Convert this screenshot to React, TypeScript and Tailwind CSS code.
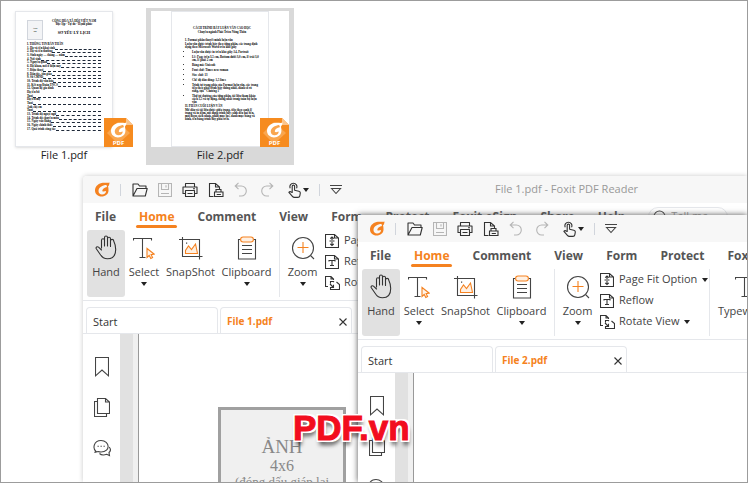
import type { ReactNode } from "react";

type IconProps = { className?: string };

const MENUS = ["File", "Home", "Comment", "View", "Form", "Protect", "Foxit eSign", "Share", "Help"];

function FoxitMark({ className }: IconProps) {
  return (
    <svg viewBox="0 0 30 30" className={className} aria-hidden="true">
      <path
        fill="currentColor"
        fillRule="evenodd"
        d="M29 1C26 3 20 0 13 2 5 4 0 10 0 17c0 7 6 12 13 12 8 0 14-5 14-12 0-3 0-5-1-8 2-2 3-5 3-8zM23 6C15 6 7 11 7 18c0 4 3 7 7 7 5 0 8-3 8-7l-5 1c-2 0-3-1-2-3 1-3 4-5 9-6z"
      />
    </svg>
  );
}

function Line({ size, className, children }: { size: string; className?: string; children: ReactNode }) {
  return (
    <svg
      viewBox={size}
      className={"shrink-0 " + (className ?? "")}
      fill="none"
      stroke="currentColor"
      strokeWidth="1.1"
      aria-hidden="true"
    >
      {children}
    </svg>
  );
}

function Caret() {
  return (
    <svg viewBox="0 0 6 4" className="h-1 w-1.5 shrink-0 text-[#222]" aria-hidden="true">
      <path fill="currentColor" d="M0 0h6L3 4z" />
    </svg>
  );
}

const OpenIcon = () => (
  <Line size="0 0 16 14" className="h-[14px] w-4 text-[#333]">
    <path d="M1 13V1h5l1.500 2H14v2.500M1 13h12.300l1.900-7.500H5L1 13z" strokeLinejoin="round" />
  </Line>
);

const SaveIcon = () => (
  <Line size="0 0 14 14" className="h-[14px] w-[14px] text-[#b5b5b5]">
    <path d="M.5.5h13v13H.5zM3.500.5v6h7v-6M8 2.200v2.300M3 10.500h8" />
  </Line>
);

const PrintIcon = () => (
  <Line size="0 0 16 16" className="h-4 w-4 text-[#333]">
    <path d="M3.500 5V1.500h9V5M3.500 11.500H1V5h14v6.500h-2.500M3.500 8.500h9v6h-9zM11 6.800h2M5.500 11.500h5" strokeLinejoin="round" />
  </Line>
);

const PagePrintIcon = () => (
  <Line size="0 0 16 16" className="h-4 w-4 text-[#333]">
    <path d="M5.500 14.500h-4v-13h6L11.500 5v2M7.500 1.500V5h4M8 10V7.500h5V10M6.500 10h8.500v4.500H6.500zM8.700 12.500h4.200" />
  </Line>
);

const UndoIcon = () => (
  <Line size="0 0 13 15" className="h-[15px] w-[13px] text-[#b5b5b5]">
    <path d="M4.500.8 1.200 4l3.300 3.200M1.500 4h5.800a5 5 0 0 1 0 10H5" />
  </Line>
);

const RedoIcon = () => (
  <Line size="0 0 13 15" className="h-[15px] w-[13px] text-[#b5b5b5]">
    <path d="M8.500.8 11.800 4 8.500 7.200M11.500 4H5.700a5 5 0 0 0 0 10H8" />
  </Line>
);

const TouchIcon = () => (
  <Line size="0 0 13 16" className="h-4 w-[13px] text-[#333]">
    <path
      d="M4.200 10.500V4.300a1.200 1.200 0 0 1 2.400 0v4l4.200.9c1 .2 1.600.9 1.500 1.900l-.5 2.700c-.2 1-.8 1.600-1.800 1.600H6.300c-.8 0-1.400-.4-1.900-1L.9 10.300c.7-1 1.800-.8 2.400-.1zM2.300 6.300a3.500 3.500 0 1 1 6.200 0"
      strokeLinejoin="round"
    />
  </Line>
);

const MoreIcon = () => (
  <Line size="0 0 12 10" className="h-2.5 w-3 text-[#444]">
    <path d="M0 .5h12M1.500 3.500 6 8.500l4.500-5z" />
  </Line>
);

const HandIcon = () => (
  <Line size="0 0 22 25" className="h-[25px] w-[22px] text-[#333]">
    <path
      d="M6.500 13V5.200a1.500 1.500 0 0 1 3 0V11M9.500 5V2.500a1.500 1.500 0 0 1 3 0V11M12.500 3.700a1.500 1.500 0 0 1 3 0V11.500M15.500 6a1.600 1.600 0 0 1 3.200 0c1 2 2 5 2 8.500 0 6-3 9.300-8.200 9.300-4 0-5.700-1.800-7.400-4.600L1.300 13.800c-.8-1.400.9-2.700 2.200-1.600L6.500 15"
      strokeLinecap="round"
      strokeLinejoin="round"
    />
  </Line>
);

const SelectIcon = () => (
  <Line size="0 0 22 24" className="h-6 w-[22px] text-[#444]">
    <path d="M.5 4.500v-2h18v2M9.500 2.500v19M6.500 21.500h6" />
    <path d="M14 12.500v9l2.200-2 1.600 3 1.800-1-1.500-2.800 3-.6z" stroke="#f58220" fill="#fff4ea" />
  </Line>
);

const SnapIcon = () => (
  <Line size="0 0 24 24" className="h-6 w-6 text-[#444]">
    <path d="M0 3.500h20.500V23.500M3.500 1v19.500H23.500" />
    <path d="M6.500 17.500v-3l3-4.500 3 3.500 4-5.500 2 9.500z" stroke="#f58220" fill="#fff0e2" />
    <path d="M7 6.500h1.200v1.200H7z" fill="currentColor" stroke="none" />
  </Line>
);

const ClipboardIcon = () => (
  <Line size="0 0 20 24" className="h-6 w-5 text-[#444]">
    <path d="M3.500 3.500h-2v19.500h17V3.500h-2M5 9.500h10M5 13.500h10M5 17.500h10" />
    <rect x="3.600" y="1" width="12.800" height="5" rx="2.500" stroke="#f58220" fill="#fff0e2" />
  </Line>
);

const ZoomIcon = () => (
  <Line size="0 0 24 24" className="h-6 w-6 text-[#444]">
    <circle cx="12" cy="12" r="10.500" />
    <path d="m19.500 19.500 3.500 3.500" />
    <path d="M6.500 11.500h11M12 6v11" stroke="#f58220" />
  </Line>
);

const PageFitIcon = () => (
  <Line size="0 0 14 16" className="h-4 w-[14px] text-[#333]">
    <path d="M.5 1.500h9l4 3.500v9.500H.5zM9.500 1.500V5h4M7 4v3M5.200 5.700 7 4l1.800 1.700M7 9v3.500M5.200 10.800 7 12.500l1.800-1.700M4.500 8h5" />
  </Line>
);

const ReflowIcon = () => (
  <Line size="0 0 14 16" className="h-4 w-[14px] text-[#333]">
    <path d="M.5 1.500h9l4 3.500v9.500H.5zM9.500 1.500V5h4M4 7.500v-1h6v1M7 6.500v5.500M5 11.500h4" />
  </Line>
);

const RotateIcon = () => (
  <Line size="0 0 15 16" className="h-4 w-[15px] text-[#333]">
    <path d="M3 11.500H.5v-10h5.500L8.500 4v1M6 1.500V4h2.500M9 7l-.500-.500H5.500v2M5.500 12v2.500h9V9.500L11.500 7M5 9l3.500 3.500M8.500 9.800v2.700H5.800" />
  </Line>
);

const BookmarkIcon = () => (
  <Line size="0 0 14 20" className="h-5 w-[14px]">
    <path d="M.5.5h13v18.300L7 13 .5 18.800z" />
  </Line>
);

const PagesIcon = () => (
  <Line size="0 0 16 20" className="h-5 w-4">
    <path d="M3.500.5h8l4 3.500v11.500h-12zM11.500.5V4h4M3.500 3.500h-3v15h12v-3" />
  </Line>
);

const CommentsIcon = () => (
  <Line size="0 0 18 18" className="h-[18px] w-[18px]">
    <path d="M3 12.500C-.5 9.500.5 1.500 8 1.500c9 0 10 11.500 0 11.500-1 0-2-.2-3-.5l-3.500 1zM16.200 8c2 2.500 1 4.500-.2 5.500l.5 3-2.800-1.200C11 16.200 8 16 6.500 14.500" />
    <path d="M4.500 7.200h1.300M7.500 7.200h1.300M10.500 7.200h1.300" />
  </Line>
);

function Badge() {
  return (
    <div className="relative flex h-[29px] w-[29px] flex-col items-center justify-between overflow-hidden bg-[#f68b1f] pt-1 text-white">
      <svg viewBox="0 0 29 29" className="absolute inset-0 h-full w-full" aria-hidden="true">
        <path d="M3 15 14 4l12 11-12 11z" fill="#f9a64f" />
        <path d="M22 0h7v7z" fill="#fff" />
        <path d="M22 0v7h7z" fill="#fbc48b" />
      </svg>
      <FoxitMark className="relative h-4 w-4" />
      <span className="relative text-[6px] leading-[8px] font-bold">PDF</span>
    </div>
  );
}

const FORM_ROWS = [
  "1. Họ và tên khai sinh",
  "2. Họ và tên thường",
  "3. Sinh ngày … tháng … năm",
  "4. Nơi sinh",
  "5. Nguyên quán",
  "6. Hộ khẩu, nơi ở hiện nay",
  "7. Điện thoại",
  "8. Dân tộc, tôn giáo",
  "9. Số CMND",
  "10. Trình độ văn hóa",
  "11. Kết nạp Đoàn TNCS",
  "12. Quan hệ gia đình",
  "Họ tên bố",
  "Tuổi",
  "Họ tên mẹ",
  "Tuổi",
  "Anh chị em",
  "Tuổi",
  "13. Trình độ ngoại ngữ",
  "14. Trình độ chuyên môn",
  "15. Ngày vào Đảng",
  "16. Ngày chính thức",
  "17. Quá trình công tác",
];

const PLAIN_ROWS = ["12. Quan hệ gia đình", "Họ tên bố", "Họ tên mẹ", "Anh chị em"];

function FormPage() {
  return (
    <div className="h-[136px] w-[98px] border border-gray-200 bg-white px-[11px] pt-2 font-['Liberation_Serif',serif] text-[3px] leading-[3px] font-bold text-black shadow-sm">
      <div className="flex justify-between">
        <div className="flex h-5 w-4 shrink-0 flex-col items-center justify-center border border-gray-300 bg-gray-100 text-[2px] leading-[3px]">
          <span>ẢNH</span>
          <span>4x6</span>
        </div>
        <div className="flex flex-1 flex-col items-center pl-1 whitespace-nowrap">
          <span>CỘNG HÒA XÃ HỘI VIỆT NAM</span>
          <span>Độc lập - Tự do - Hạnh phúc</span>
          <span className="mt-1 text-[4px] leading-[5px]">SƠ YẾU LÝ LỊCH</span>
        </div>
      </div>
      <div className="mt-[3px] flex h-[88px] flex-col justify-between">
        <div>I. THÔNG TIN BẢN THÂN</div>
        {FORM_ROWS.map((row, i) => (
          <div key={i} className="flex items-end whitespace-nowrap">
            <span>{row}</span>
            {!PLAIN_ROWS.includes(row) && <span className="flex-1 border-b border-dashed border-gray-800" />}
          </div>
        ))}
      </div>
    </div>
  );
}

const GUIDE_ITEMS = [
  "Luận văn được in trên khổ giấy A4, Portrait",
  "Lề: Page trên 3,5 cm, Bottom dưới 3,0 cm, lề trái 3,0 cm, lề phải 2 cm",
  "Bảng mã: Unicode",
  "Font chữ: Times new roman",
  "Size chữ: 13",
  "Chế độ dãn dòng: 1,5 lines",
  "Trình tự trang phía của Format luận văn, các trang tiếp theo phải trình bày thống nhất, đánh số rõ ràng, tựa \"Chương 1\"",
  "Thứ tự chương của từng phần, tài liệu tham khảo cách 1,5 và tự động, thống nhất trong toàn bộ luận văn",
];

function GuidePage() {
  return (
    <div className="h-[136px] w-[98px] border border-gray-200 bg-white pt-[15px] pr-[9px] pl-[13px] font-['Liberation_Serif',serif] text-[3px] leading-[3px] font-bold text-black">
      <div className="text-center whitespace-nowrap">CÁCH TRÌNH BÀY LUẬN VĂN CAO HỌC</div>
      <div className="mt-px text-center">Chuyên ngành Phát Triển Nông Thôn</div>
      <div className="mt-[5px] flex h-[82px] flex-col justify-between">
        <div>I. Format phần thuyết minh luận văn</div>
        <p>Luận văn được trình bày theo từng phần, các trang định dạng theo Microsoft Word trên khổ giấy</p>
        <ul className="flex list-disc flex-col gap-[2px] pl-[7px]">
          {GUIDE_ITEMS.map((item) => (
            <li key={item}>{item}</li>
          ))}
        </ul>
        <div>II. PHẦN CUỐI LUẬN VĂN</div>
        <p>
          Mở đầu và tài liệu được giữa trang, tiếp theo canh lề trang và in đậm, nội dung trình bày canh đều hai bên,
          mỗi đoạn cách nhau, phần mục lục, danh mục bảng và hình, tên bảng trình bày phía trên.
        </p>
      </div>
    </div>
  );
}

function TitleBar({ title }: { title: string }) {
  return (
    <header className="flex h-[27px] shrink-0 items-center bg-[#f7f7f7] pl-3 whitespace-nowrap">
      <FoxitMark className="h-[15px] w-[15px] shrink-0 text-[#f58220]" />
      <span className="ml-2.5 h-3 w-px shrink-0 bg-gray-300" />
      <div className="ml-[11px] flex shrink-0 items-center gap-2.5">
        <button aria-label="Open"><OpenIcon /></button>
        <button aria-label="Save"><SaveIcon /></button>
        <button aria-label="Print"><PrintIcon /></button>
        <button aria-label="Print page"><PagePrintIcon /></button>
        <button aria-label="Undo"><UndoIcon /></button>
        <button aria-label="Redo" className="ml-1"><RedoIcon /></button>
        <button aria-label="Touch mode" className="ml-1 flex items-center gap-[2px]">
          <TouchIcon />
          <Caret />
        </button>
      </div>
      <span className="ml-2.5 h-3 w-px shrink-0 bg-gray-300" />
      <button aria-label="More" className="ml-2.5 shrink-0"><MoreIcon /></button>
      <span className="ml-[153px] shrink-0 text-[11px] text-[#999]">{title}</span>
    </header>
  );
}

function MenuBar({ id }: { id: string }) {
  return (
    <nav className="flex h-[27px] shrink-0 items-center gap-[23px] pl-3 text-[12px] font-bold whitespace-nowrap text-[#555]">
      {MENUS.map((m) => (
        <button
          key={m}
          className={
            m === "Home"
              ? "relative shrink-0 text-[#f58220] after:absolute after:inset-x-[-3px] after:bottom-[-2px] after:h-[3px] after:rounded-full after:bg-[#f58220]"
              : "shrink-0"
          }
        >
          {m}
        </button>
      ))}
      <label htmlFor={id} className="flex h-5 w-20 shrink-0 items-center gap-1 rounded-full border border-gray-200 px-1">
        <Line size="0 0 14 14" className="h-[14px] w-[14px] text-[#444]">
          <circle cx="6.500" cy="6.500" r="5.500" />
          <path d="m10.500 10.500 3 3" />
        </Line>
        <input
          id={id}
          aria-label="Tell me"
          placeholder="Tell me..."
          className="w-12 text-[11px] font-normal placeholder:text-[#999]"
        />
      </label>
    </nav>
  );
}

type ToolProps = { label: string; icon: ReactNode; menu?: boolean; className?: string };

function Tool({ label, icon, menu, className }: ToolProps) {
  return (
    <button className={"flex h-[67px] shrink-0 flex-col items-center rounded-[3px] pt-1 " + (className ?? "")}>
      <span className="flex h-[27px] items-center">{icon}</span>
      <span className="mt-[3px] leading-4">{label}</span>
      {menu && <span className="mt-[2px]"><Caret /></span>}
    </button>
  );
}

function SmallTool({ label, icon, menu }: ToolProps) {
  return (
    <button className="flex h-[21px] items-center gap-1">
      <span className="flex w-[15px]">{icon}</span>
      {label}
      {menu && <span className="ml-px"><Caret /></span>}
    </button>
  );
}

function Toolbar() {
  return (
    <div className="flex h-[71px] shrink-0 border-b border-gray-200 pl-1 text-[11px] whitespace-nowrap text-[#444]">
      <Tool label="Hand" icon={<HandIcon />} className="w-[38px] bg-[#e1e1e1]" />
      <Tool label="Select" icon={<SelectIcon />} menu className="w-[38px]" />
      <Tool label="SnapShot" icon={<SnapIcon />} className="w-[55px]" />
      <Tool label="Clipboard" icon={<ClipboardIcon />} menu className="w-[57px]" />
      <div className="ml-1 h-[67px] w-px shrink-0 bg-gray-200" />
      <Tool label="Zoom" icon={<ZoomIcon />} menu className="w-[45px]" />
      <div className="flex w-[109px] shrink-0 flex-col">
        <SmallTool label="Page Fit Option" icon={<PageFitIcon />} menu />
        <SmallTool label="Reflow" icon={<ReflowIcon />} />
        <SmallTool label="Rotate View" icon={<RotateIcon />} menu />
      </div>
      <div className="h-[67px] w-px shrink-0 bg-gray-200" />
      <Tool
        label="Typewriter"
        icon={
          <Line size="0 0 20 24" className="h-6 w-5">
            <path d="M.5 4.500v-2h18v2M9.500 2.500v19M6.500 21.500h6" />
          </Line>
        }
        className="ml-2"
      />
    </div>
  );
}

function Tabs({ file }: { file: string }) {
  return (
    <div className="flex h-[33px] shrink-0 items-end gap-[2px] border-b border-gray-200 pl-[3px] text-[11px]">
      <button className="h-[26px] w-[132px] shrink-0 rounded-t border border-b-0 border-gray-200 pt-[3px] pl-1.5 text-left text-[#333]">
        Start
      </button>
      <div className="flex h-[26px] w-[132px] shrink-0 items-center justify-between rounded-t border border-b-0 border-gray-200 pt-[2px] pr-1 pl-1.5">
        <button className="text-[10px] font-bold text-[#f58220]">{file}</button>
        <button aria-label={"Close " + file}>
          <svg viewBox="0 0 8 8" className="h-2 w-2" stroke="#333" strokeWidth="1.1" aria-hidden="true">
            <path d="M.5.5l7 7m0-7-7 7" />
          </svg>
        </button>
      </div>
    </div>
  );
}

function ReaderWindow({ file, className, children }: { file: string; className: string; children?: ReactNode }) {
  return (
    <section className={"absolute right-0 bottom-0 flex flex-col overflow-hidden bg-white " + className}>
      <TitleBar title={file + " - Foxit PDF Reader"} />
      <MenuBar id={"search " + file} />
      <Toolbar />
      <Tabs file={file} />
      <div className="flex min-h-0 flex-1 overflow-hidden">
        <div className="flex w-[37px] shrink-0 flex-col items-center gap-[21px] pt-[23px] text-[#444]">
          <button aria-label="Bookmarks"><BookmarkIcon /></button>
          <button aria-label="Pages"><PagesIcon /></button>
          <button aria-label="Comments"><CommentsIcon /></button>
        </div>
        <div className="w-[13px] shrink-0 bg-[#e1e1e1]" />
        <div className="w-1.5 shrink-0 border-r border-[#999] bg-[#f0f0f0]" />
        <main className="flex-1">{children}</main>
      </div>
    </section>
  );
}

export default function App() {
  return (
    <div className="relative h-screen overflow-hidden border border-[#9c9c9c] bg-white font-['Open_Sans',sans-serif] text-[#222]">
      <div className="flex gap-[33px] pl-[14px] text-[11px] leading-4">
        <figure className="flex flex-col items-center pt-[10px]">
          <div className="relative">
            <FormPage />
            <div className="absolute right-[-20px] bottom-0"><Badge /></div>
          </div>
          <figcaption>File 1.pdf</figcaption>
        </figure>
        <figure className="mt-[7px] flex h-[157px] w-[148px] flex-col items-center bg-[#d9d9d9] px-[5px] pt-[3px]">
          <div className="relative flex w-full justify-center bg-white">
            <GuidePage />
            <div className="absolute right-0 bottom-0"><Badge /></div>
          </div>
          <figcaption>File 2.pdf</figcaption>
        </figure>
      </div>

      <ReaderWindow file="File 1.pdf" className="top-[175px] left-[82px] rounded-tl shadow-[0_0_5px_#c8c8c8]">
        <div className="mt-[73px] ml-[79px] h-40 w-32 border-[3px] border-[#a0a0a0] bg-[#f0f0f0] pt-[26px] text-center font-['Liberation_Serif',serif] whitespace-nowrap text-[#888]">
          <div className="text-[19px] leading-[22px]">ẢNH</div>
          <div className="text-[16px] leading-4">4x6</div>
          <div className="text-[13px] leading-4">(đóng dấu giáp lai</div>
        </div>
      </ReaderWindow>
      <ReaderWindow file="File 2.pdf" className="top-[214px] left-[357px] shadow-[0_0_6px_#555]" />

      <div className="absolute top-[407px] left-[292px] font-['Liberation_Sans',sans-serif] text-[35px] leading-10 font-bold text-[#f20d1e] [-webkit-text-stroke:1px_#f20d1e] [text-shadow:2px_0_white,-2px_0_white,0_2px_white,0_-2px_white,2px_2px_white,-2px_2px_white,2px_-2px_white,-2px_-2px_white,1px_5px_4px_#000a]">
        PDF.vn
      </div>
    </div>
  );
}
